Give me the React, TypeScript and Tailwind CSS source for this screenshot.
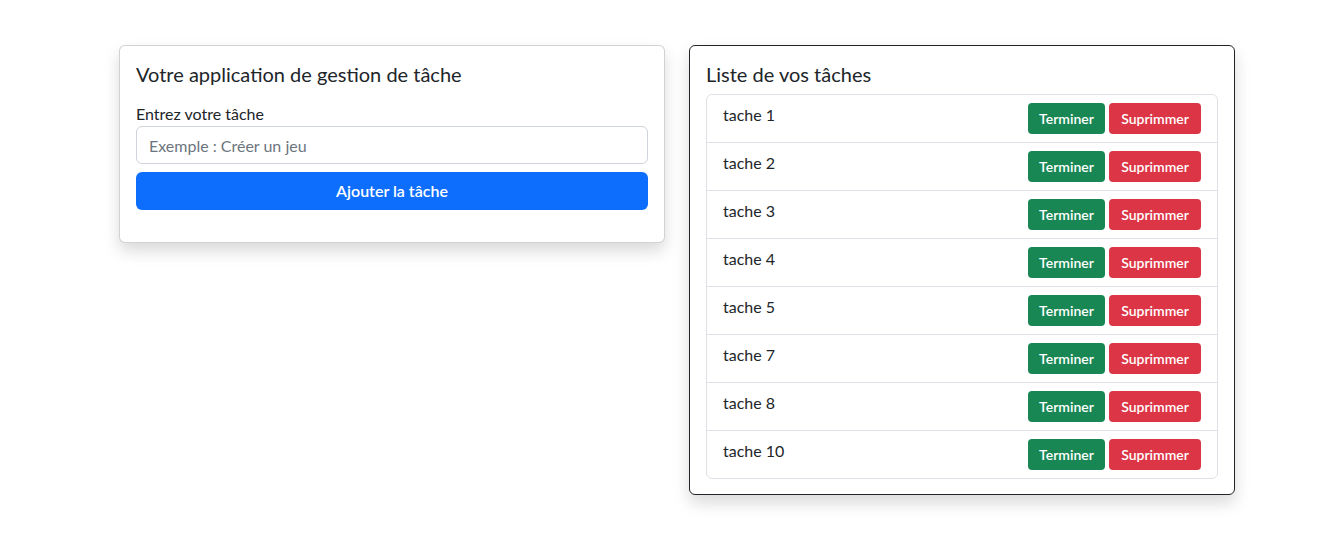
import React, { useState } from 'react';

const initialTasks = ['tache 1', 'tache 2', 'tache 3', 'tache 4', 'tache 5', 'tache 7', 'tache 8', 'tache 10'];

const App: React.FC = () => {
    const [tasks, setTasks] = useState<string[]>(initialTasks);
    const [value, setValue] = useState('');

    const addTask = () => {
        if (!value.trim()) return;
        setTasks([...tasks, value.trim()]);
        setValue('');
    };

    const removeTask = (index: number) => {
        setTasks(tasks.filter((_, i) => i !== index));
    };

    return (
        <div
            className="min-h-[556px] bg-white text-[#212529]"
            style={{ fontFamily: 'Lato, "Noto Sans", sans-serif' }}
        >
            <div className="flex items-start gap-[24px] pl-[119px] pt-[45px]">
                <div className="w-[546px] rounded-md border border-black/[0.175] bg-white p-4 shadow-[0_8px_16px_rgba(0,0,0,0.15)]">
                    <h5 className="mb-4 text-[20px] leading-[24px]">Votre application de gestion de tâche</h5>
                    <div className="mb-4">
                        <label className="block text-base leading-6">Entrez votre tâche</label>
                        <input
                            value={value}
                            onChange={(e) => setValue(e.target.value)}
                            placeholder="Exemple : Créer un jeu"
                            className="block h-[38px] w-full rounded-md border border-[#ced4da] px-3 text-base outline-none placeholder:text-[#6c757d]"
                        />
                        <button
                            onClick={addTask}
                            className="mt-2 h-[38px] w-full rounded-md bg-[#0d6efd] text-base font-semibold text-white"
                        >
                            Ajouter la tâche
                        </button>
                    </div>
                </div>

                <div className="w-[546px] rounded-md border border-[#212529] bg-white px-4 pt-4 pb-[15px] shadow-[0_8px_16px_rgba(0,0,0,0.15)]">
                    <h5 className="mb-2 text-[20px] leading-[24px]">Liste de vos tâches</h5>
                    <ul className="rounded-md border border-[#dee2e6]">
                        {tasks.map((task, i) => (
                            <li
                                key={task + i}
                                className="flex items-start justify-between border-t border-[#dee2e6] px-4 py-2 first:border-t-0"
                            >
                                <span className="text-base leading-6">{task}</span>
                                <div className="flex gap-1">
                                    <button className="h-[31px] w-[77px] rounded bg-[#198754] text-sm font-semibold text-white">
                                        Terminer
                                    </button>
                                    <button
                                        onClick={() => removeTask(i)}
                                        className="h-[31px] w-[92px] rounded bg-[#dc3545] text-sm font-semibold text-white"
                                    >
                                        Suprimmer
                                    </button>
                                </div>
                            </li>
                        ))}
                    </ul>
                </div>
            </div>
        </div>
    );
};

export default App;
